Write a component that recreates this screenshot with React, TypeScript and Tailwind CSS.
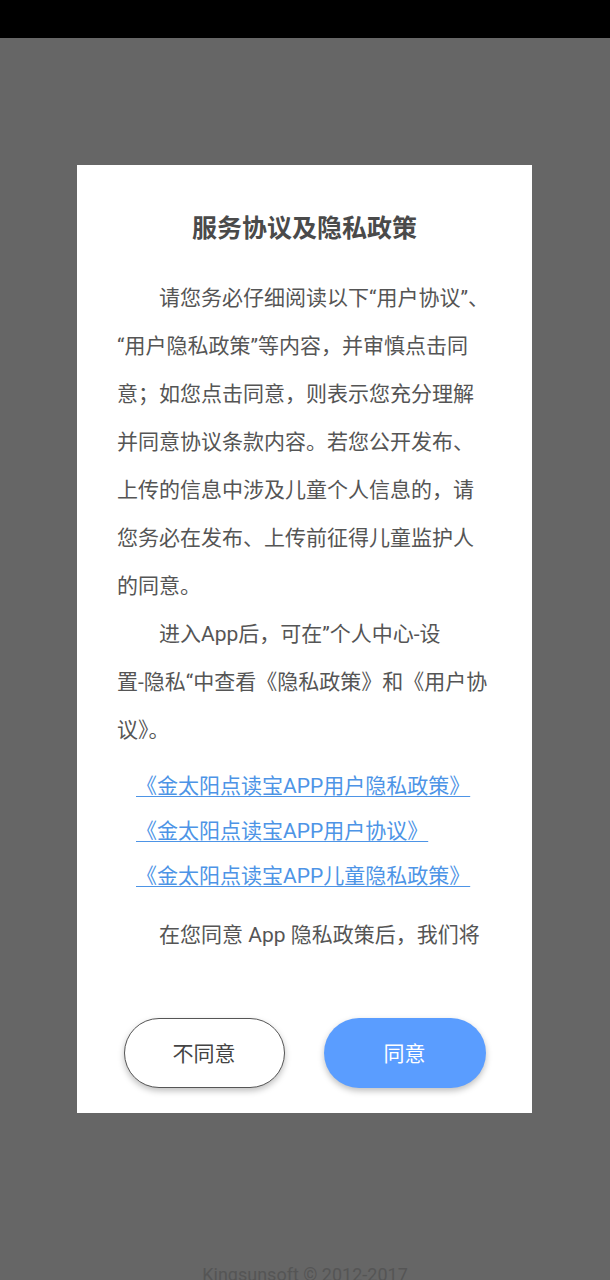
import React from "react"

const font = { fontFamily: 'Roboto, "Noto Sans CJK SC", sans-serif' }

const introLines = [
  "请您务必仔细阅读以下“用户协议”、",
  "“用户隐私政策”等内容，并审慎点击同",
  "意；如您点击同意，则表示您充分理解",
  "并同意协议条款内容。若您公开发布、",
  "上传的信息中涉及儿童个人信息的，请",
  "您务必在发布、上传前征得儿童监护人",
  "的同意。",
]

const entryLines = [
  "进入App后，可在”个人中心-设",
  "置-隐私“中查看《隐私政策》和《用户协",
  "议》。",
]

const links = [
  "《金太阳点读宝APP用户隐私政策》",
  "《金太阳点读宝APP用户协议》",
  "《金太阳点读宝APP儿童隐私政策》",
]

function Paragraph({ lines }: { lines: string[] }) {
  return (
    <p className="text-[21px] leading-[48px] text-[#555555]">
      {lines.map((line, i) => (
        <span key={i} className={`block whitespace-nowrap ${i === 0 ? "pl-[42px]" : ""}`}>
          {line}
        </span>
      ))}
    </p>
  )
}

export default function App() {
  return (
    <div className="w-[610px] h-[1280px] bg-[#666666] flex flex-col overflow-hidden" style={font}>
      <div className="h-[38px] bg-black shrink-0" />

      <div className="mt-[127px] ml-[77px] w-[455px] h-[948px] bg-white flex flex-col shrink-0">
        <div className="pt-[41px] h-[86px] text-center text-[25px] leading-[46px] font-bold text-[#4a4a4a]">
          服务协议及隐私政策
        </div>

        <div className="mt-[23px] flex-1 overflow-hidden px-[40px]">
          <Paragraph lines={introLines} />
          <Paragraph lines={entryLines} />

          <div className="mt-[10px] pl-[19px] flex flex-col items-start">
            {links.map((link) => (
              <a
                key={link}
                href="#"
                className="text-[21px] leading-[45px] text-[#4d94e6] underline decoration-1 underline-offset-[3px] whitespace-nowrap"
              >
                {link}
              </a>
            ))}
          </div>

          <div className="mt-[12px]">
            <Paragraph lines={["在您同意 App 隐私政策后，我们将"]} />
          </div>
        </div>

        <div className="pt-[60px] pb-[25px] flex justify-center gap-[39px]">
          <button className="w-[161px] h-[70px] rounded-full border-[1.5px] border-[#555555] bg-white text-[21px] leading-none pt-[3px] text-[#444444] shadow-[0_3px_6px_rgba(0,0,0,0.25)]">
            不同意
          </button>
          <button className="w-[162px] h-[70px] rounded-full bg-[#5a9dff] text-[21px] leading-none pt-[3px] text-white shadow-[0_3px_6px_rgba(0,0,0,0.25)]">
            同意
          </button>
        </div>
      </div>

      <div className="mt-[153px] text-center text-[18px] leading-[18px] text-[#555555] shrink-0">
        Kingsunsoft © 2012-2017
      </div>
    </div>
  )
}
